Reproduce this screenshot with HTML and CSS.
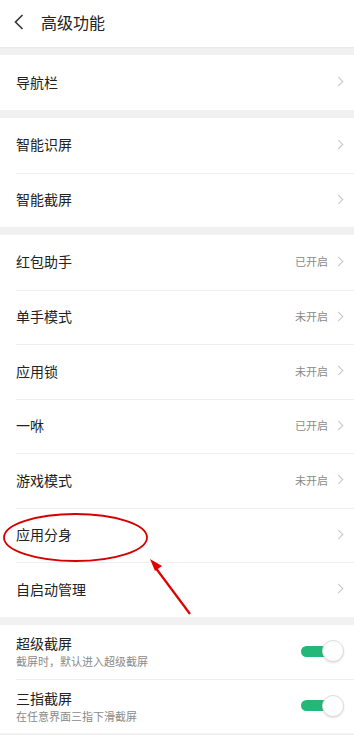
FILE: index.html
```html
<!DOCTYPE html>
<html lang="zh">
<head>
<meta charset="utf-8">
<link rel="stylesheet" href="styles.css">
</head>
<body>
<div class="page">
  <header class="topbar">
    <svg class="back" width="12" height="18" viewBox="0 0 12 18"><path d="M9.5 2 L2.5 9 L9.5 16" fill="none" stroke="#333" stroke-width="1.6"/></svg>
    <span class="title">高级功能</span>
  </header>

  <section class="group">
    <div class="row"><span class="label">导航栏</span><span class="chev"></span></div>
  </section>

  <section class="group">
    <div class="row"><span class="label">智能识屏</span><span class="chev"></span></div>
    <div class="row"><span class="label">智能截屏</span><span class="chev"></span></div>
  </section>

  <section class="group">
    <div class="row"><span class="label">红包助手</span><span class="status">已开启</span><span class="chev"></span></div>
    <div class="row"><span class="label">单手模式</span><span class="status">未开启</span><span class="chev"></span></div>
    <div class="row"><span class="label">应用锁</span><span class="status">未开启</span><span class="chev"></span></div>
    <div class="row"><span class="label">一咻</span><span class="status">已开启</span><span class="chev"></span></div>
    <div class="row"><span class="label">游戏模式</span><span class="status">未开启</span><span class="chev"></span></div>
    <div class="row"><span class="label">应用分身</span><span class="chev"></span></div>
    <div class="row"><span class="label">自启动管理</span><span class="chev"></span></div>
  </section>

  <section class="group">
    <div class="row tall">
      <div class="texts"><span class="label">超级截屏</span><span class="sub">截屏时，默认进入超级截屏</span></div>
      <span class="toggle"><span class="knob"></span></span>
    </div>
    <div class="row tall">
      <div class="texts"><span class="label">三指截屏</span><span class="sub">在任意界面三指下滑截屏</span></div>
      <span class="toggle"><span class="knob"></span></span>
    </div>
  </section>

  <svg class="annot" width="354" height="735" viewBox="0 0 354 735">
    <ellipse cx="75.5" cy="537.5" rx="71.5" ry="23.5" fill="none" stroke="#d40000" stroke-width="1.8"/>
    <line x1="190" y1="614" x2="155" y2="567" stroke="#e00000" stroke-width="2.2"/>
    <polygon points="150,559 162,566 155,571" fill="#e00000"/>
  </svg>
</div>
</body>
</html>
```

FILE: styles.css
```css
* { box-sizing: border-box; }
html, body { margin: 0; padding: 0; }
body {
  background: #f1f1f1;
  font-family: "Noto Sans CJK SC", "Noto Sans", sans-serif;
  color: #222;
}
.page {
  position: relative;
  width: 354px;
  height: 735px;
  overflow: hidden;
}
.topbar {
  height: 47px;
  background: #fff;
  display: flex;
  align-items: center;
  padding-left: 13px;
  padding-bottom: 3px;
  box-shadow: 0 1px 2px rgba(0,0,0,0.05);
}
.back { margin-right: 16px; }
.title { font-size: 16px; color: #222; }
.group {
  background: #fff;
  margin-top: 8px;
  padding-left: 16px;
}
.row {
  height: 54.5px;
  display: flex;
  align-items: center;
  padding-right: 10px;
  padding-bottom: 2px;
  border-top: 1px solid #efefef;
}
.row:first-child { border-top: none; }
.group:nth-of-type(1) .row { height: 55px; }
.label { font-size: 14px; color: #222; flex: 1; }
.status { font-size: 11px; color: #8a8a8a; margin-right: 7px; }
.chev {
  width: 7px;
  height: 7px;
  border-top: 1.2px solid #c6c6c6;
  border-right: 1.2px solid #c6c6c6;
  transform: rotate(45deg);
  margin-right: 2px;
}
.row.tall { height: 54px; padding-bottom: 1px; }
.texts { flex: 1; display: flex; flex-direction: column; }
.texts .label { line-height: 20px; }
.sub { font-size: 11px; color: #8a8a8a; line-height: 16px; }
.toggle {
  position: relative;
  width: 43px;
  height: 22px;
  display: flex;
  align-items: center;
}
.toggle::before {
  content: "";
  width: 30px;
  height: 11px;
  border-radius: 6px;
  background: #23b877;
}
.knob {
  position: absolute;
  right: 0;
  top: 0;
  width: 22px;
  height: 22px;
  border-radius: 50%;
  background: #fff;
  border: 1px solid #dcdcdc;
  box-shadow: 0 1px 2px rgba(0,0,0,0.12);
}
.annot {
  position: absolute;
  left: 0;
  top: 0;
  pointer-events: none;
}
```
